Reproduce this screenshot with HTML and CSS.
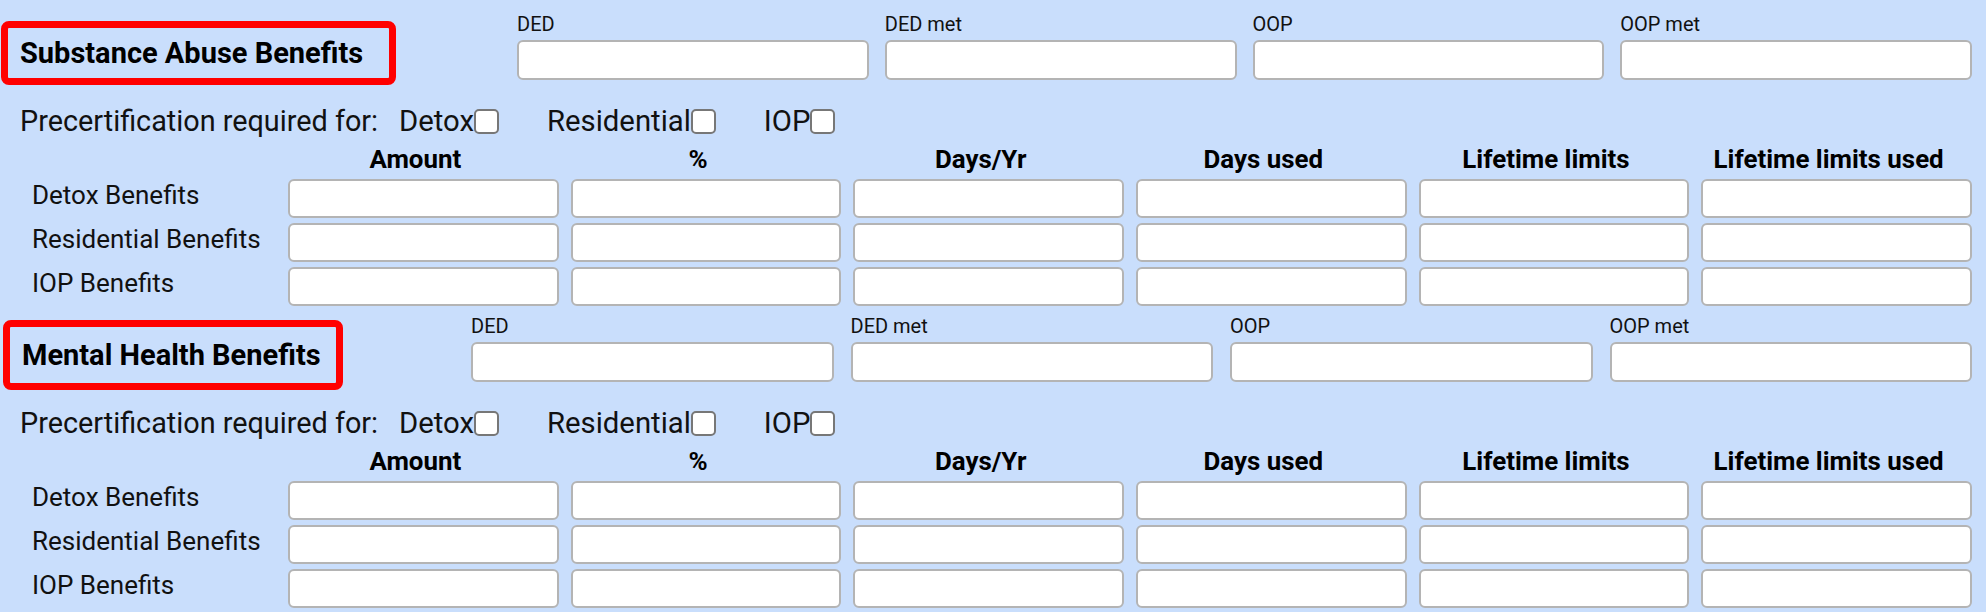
FILE: index.html
```html
<!DOCTYPE html>
<html lang="en">
<head>
<meta charset="utf-8">
<title>Benefits</title>
<link rel="stylesheet" href="styles.css">
</head>
<body>
<div class="page">
  <section class="sec sec-sa">
    <div class="head">
      <div class="title-box"><h2 class="title">Substance Abuse Benefits</h2></div>
      <div class="fields">
        <label class="field"><span class="field-label">DED</span><input class="inp inp-head" type="text"></label>
        <label class="field"><span class="field-label">DED met</span><input class="inp inp-head" type="text"></label>
        <label class="field"><span class="field-label">OOP</span><input class="inp inp-head" type="text"></label>
        <label class="field"><span class="field-label">OOP met</span><input class="inp inp-head" type="text"></label>
      </div>
    </div>
    <div class="precert">
      <span class="precert-label">Precertification required for:</span>
      <label class="check"><span>Detox</span><input class="cb" type="checkbox"></label>
      <label class="check"><span>Residential</span><input class="cb" type="checkbox"></label>
      <label class="check"><span>IOP</span><input class="cb" type="checkbox"></label>
    </div>
    <div class="grid">
      <div></div>
      <div class="th">Amount</div>
      <div class="th">%</div>
      <div class="th">Days/Yr</div>
      <div class="th">Days used</div>
      <div class="th">Lifetime limits</div>
      <div class="th">Lifetime limits used</div>
      <div class="rl">Detox Benefits</div>
      <input class="inp" type="text"><input class="inp" type="text"><input class="inp" type="text"><input class="inp" type="text"><input class="inp" type="text"><input class="inp" type="text">
      <div class="rl">Residential Benefits</div>
      <input class="inp" type="text"><input class="inp" type="text"><input class="inp" type="text"><input class="inp" type="text"><input class="inp" type="text"><input class="inp" type="text">
      <div class="rl">IOP Benefits</div>
      <input class="inp" type="text"><input class="inp" type="text"><input class="inp" type="text"><input class="inp" type="text"><input class="inp" type="text"><input class="inp" type="text">
    </div>
  </section>

  <section class="sec sec-mh">
    <div class="head">
      <div class="title-box"><h2 class="title">Mental Health Benefits</h2></div>
      <div class="fields">
        <label class="field"><span class="field-label">DED</span><input class="inp inp-head" type="text"></label>
        <label class="field"><span class="field-label">DED met</span><input class="inp inp-head" type="text"></label>
        <label class="field"><span class="field-label">OOP</span><input class="inp inp-head" type="text"></label>
        <label class="field"><span class="field-label">OOP met</span><input class="inp inp-head" type="text"></label>
      </div>
    </div>
    <div class="precert">
      <span class="precert-label">Precertification required for:</span>
      <label class="check"><span>Detox</span><input class="cb" type="checkbox"></label>
      <label class="check"><span>Residential</span><input class="cb" type="checkbox"></label>
      <label class="check"><span>IOP</span><input class="cb" type="checkbox"></label>
    </div>
    <div class="grid">
      <div></div>
      <div class="th">Amount</div>
      <div class="th">%</div>
      <div class="th">Days/Yr</div>
      <div class="th">Days used</div>
      <div class="th">Lifetime limits</div>
      <div class="th">Lifetime limits used</div>
      <div class="rl">Detox Benefits</div>
      <input class="inp" type="text"><input class="inp" type="text"><input class="inp" type="text"><input class="inp" type="text"><input class="inp" type="text"><input class="inp" type="text">
      <div class="rl">Residential Benefits</div>
      <input class="inp" type="text"><input class="inp" type="text"><input class="inp" type="text"><input class="inp" type="text"><input class="inp" type="text"><input class="inp" type="text">
      <div class="rl">IOP Benefits</div>
      <input class="inp" type="text"><input class="inp" type="text"><input class="inp" type="text"><input class="inp" type="text"><input class="inp" type="text"><input class="inp" type="text">
    </div>
  </section>
</div>
</body>
</html>
```
FILE: styles.css
```css
html, body {
  margin: 0;
  padding: 0;
  background: #c9defc;
  overflow: hidden;
}
body {
  font-family: Roboto, "Liberation Sans", Arial, sans-serif;
  color: #000;
}
.page {
  padding: 12px 14px 0 0;
}
.sec + .sec {
  margin-top: 8px;
}
.head {
  display: flex;
  align-items: center;
  height: 82px;
}
.title-box {
  box-sizing: border-box;
  border: 7px solid #ff0000;
  border-radius: 8px;
  padding: 8px 0 8px 12px;
  flex: none;
}
.sec-sa .title-box {
  margin-left: 1px;
  width: 395px;
}
.sec-mh .title-box {
  margin-left: 3px;
  width: 340px;
  padding-top: 11px;
  padding-bottom: 11px;
}
.title {
  margin: 0;
  font-size: 29px;
  line-height: 34px;
  font-weight: 700;
  white-space: nowrap;
}
.fields {
  display: flex;
  flex: 1;
  align-self: flex-start;
}
.sec-sa .fields {
  margin-left: 121px;
  gap: 16px;
}
.sec-mh .fields {
  margin-left: 128px;
  gap: 17px;
}
.field {
  flex: 1;
  min-width: 0;
  display: flex;
  flex-direction: column;
}
.field-label {
  font-size: 20px;
  line-height: 24px;
  color: #111;
}
.inp {
  box-sizing: border-box;
  display: block;
  width: 100%;
  min-width: 0;
  height: 39px;
  margin: 0;
  padding: 0 8px;
  background: #fff;
  border: 2px solid #b4b4b4;
  border-radius: 6px;
  font: inherit;
  font-size: 20px;
  outline: none;
}
.inp-head {
  height: 40px;
  margin-top: 4px;
}
.precert {
  display: flex;
  align-items: center;
  height: 34px;
  margin-top: 10px;
  padding-left: 20px;
  font-size: 29.3px;
  line-height: 34px;
  color: #111;
}
.precert-label {
  width: 379px;
  flex: none;
  font-size: 28.8px;
  white-space: nowrap;
}
.check {
  display: flex;
  align-items: center;
  margin-right: 48px;
}
.cb {
  appearance: none;
  -webkit-appearance: none;
  box-sizing: border-box;
  width: 25px;
  height: 25px;
  margin: 0;
  background: #fff;
  border: 2px solid #777;
  border-radius: 5px;
}
.grid {
  display: grid;
  grid-template-columns: 244px repeat(6, 1fr);
  grid-template-rows: 29px repeat(3, 39px);
  column-gap: 12px;
  row-gap: 5px;
  margin: 7px 0 0 32px;
}
.th {
  font-size: 25.9px;
  font-weight: 700;
  line-height: 29px;
  text-align: center;
  padding-right: 16px;
  white-space: nowrap;
}
.rl {
  font-size: 26px;
  line-height: 30px;
  align-self: center;
  padding-bottom: 7px;
  color: #111;
  white-space: nowrap;
}
```
